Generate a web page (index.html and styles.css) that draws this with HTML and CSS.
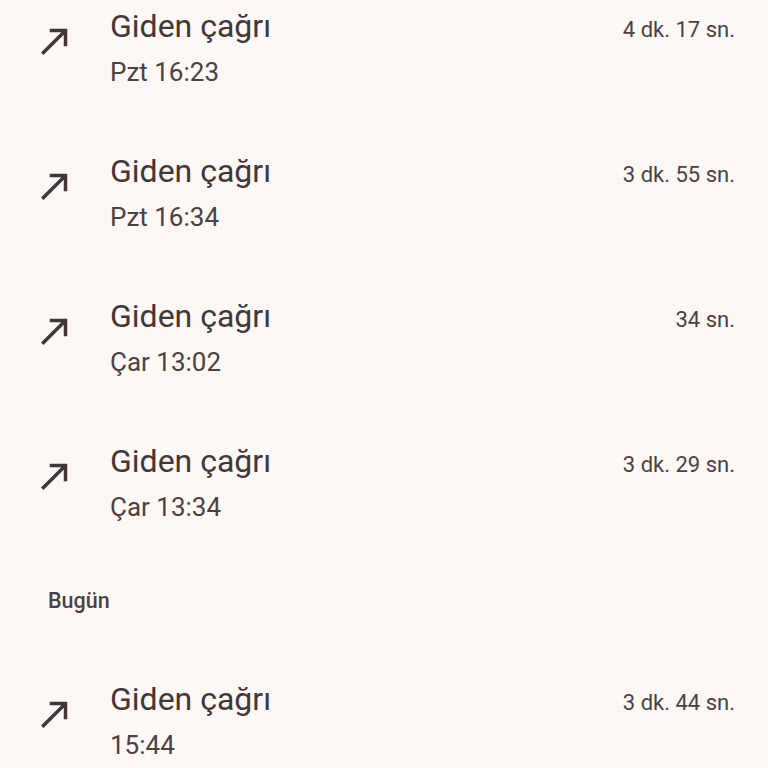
FILE: index.html
```html
<!DOCTYPE html>
<html lang="tr">
<head>
    <meta charset="UTF-8">
    <meta name="viewport" content="width=device-width, initial-scale=1.0">
    <title>Arama geçmişi</title>
    <link rel="stylesheet" href="styles.css">
</head>
<body>
    <div class="call-list">
        <div class="call-row">
            <svg class="call-icon" viewBox="0 0 24 24"><path d="M9 5v2h6.59L4 18.59 5.41 20 17 8.41V15h2V5z"/></svg>
            <div class="call-info">
                <div class="call-top">
                    <span class="call-title">Giden çağrı</span>
                    <span class="call-duration">4 dk. 17 sn.</span>
                </div>
                <div class="call-time">Pzt 16:23</div>
            </div>
        </div>

        <div class="call-row">
            <svg class="call-icon" viewBox="0 0 24 24"><path d="M9 5v2h6.59L4 18.59 5.41 20 17 8.41V15h2V5z"/></svg>
            <div class="call-info">
                <div class="call-top">
                    <span class="call-title">Giden çağrı</span>
                    <span class="call-duration">3 dk. 55 sn.</span>
                </div>
                <div class="call-time">Pzt 16:34</div>
            </div>
        </div>

        <div class="call-row">
            <svg class="call-icon" viewBox="0 0 24 24"><path d="M9 5v2h6.59L4 18.59 5.41 20 17 8.41V15h2V5z"/></svg>
            <div class="call-info">
                <div class="call-top">
                    <span class="call-title">Giden çağrı</span>
                    <span class="call-duration">34 sn.</span>
                </div>
                <div class="call-time">Çar 13:02</div>
            </div>
        </div>

        <div class="call-row">
            <svg class="call-icon" viewBox="0 0 24 24"><path d="M9 5v2h6.59L4 18.59 5.41 20 17 8.41V15h2V5z"/></svg>
            <div class="call-info">
                <div class="call-top">
                    <span class="call-title">Giden çağrı</span>
                    <span class="call-duration">3 dk. 29 sn.</span>
                </div>
                <div class="call-time">Çar 13:34</div>
            </div>
        </div>

        <div class="day-header">Bugün</div>

        <div class="call-row">
            <svg class="call-icon" viewBox="0 0 24 24"><path d="M9 5v2h6.59L4 18.59 5.41 20 17 8.41V15h2V5z"/></svg>
            <div class="call-info">
                <div class="call-top">
                    <span class="call-title">Giden çağrı</span>
                    <span class="call-duration">3 dk. 44 sn.</span>
                </div>
                <div class="call-time">15:44</div>
            </div>
        </div>
    </div>
</body>
</html>
```

FILE: styles.css
```css
body {
    margin: 0;
    background-color: #fdf7f5;
    font-family: Roboto, "Noto Sans", sans-serif;
    color: #403838;
    overflow: hidden;
}
.call-list {
    margin-top: -26px;
}
.call-row {
    display: flex;
    align-items: center;
    height: 145px;
    padding: 0 33px 0 34px;
    box-sizing: border-box;
}
.call-icon {
    width: 42px;
    height: 42px;
    fill: #403838;
    margin-right: 34px;
    margin-bottom: 12px;
    flex-shrink: 0;
}
.call-info {
    flex: 1;
}
.call-top {
    display: flex;
    justify-content: space-between;
    align-items: baseline;
    line-height: 44px;
    padding-top: 3px;
}
.call-title {
    font-size: 32px;
}
.call-duration {
    font-size: 22px;
    color: #4a4242;
}
.call-time {
    font-size: 26px;
    line-height: 41px;
    color: #4a4242;
}
.day-header {
    height: 93px;
    display: flex;
    align-items: center;
    padding-left: 48px;
    font-size: 21.5px;
    font-weight: 500;
    color: #4a4242;
}
```
